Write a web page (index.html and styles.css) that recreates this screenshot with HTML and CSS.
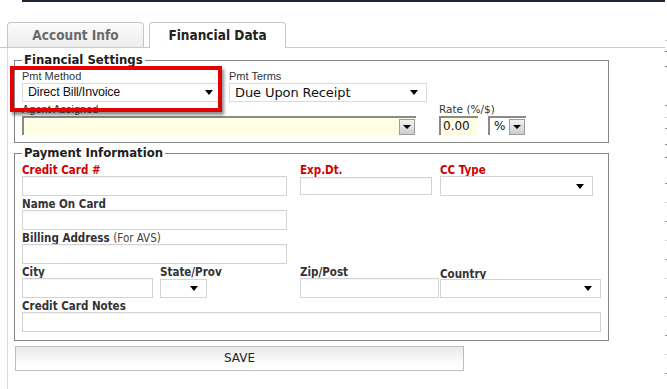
FILE: index.html
```html
<!DOCTYPE html>
<html>
<head>
<meta charset="utf-8">
<link rel="stylesheet" href="styles.css">
</head>
<body>
<div class="page">
  <div class="main">
    <div class="topline"></div>
    <div class="tabs">
      <div class="tab">Account Info</div>
      <div class="tab active">Financial Data</div>
    </div>
    <div class="content">
      <fieldset class="fs fs1">
        <legend>Financial Settings</legend>
        <div class="row">
          <div class="field pm">
            <div class="lbl-s">Pmt Method</div>
            <div class="sel plain w-pm"><span class="seltxt">Direct Bill/Invoice</span><span class="arr"></span></div>
            <div class="highlight"></div>
          </div>
          <div class="field">
            <div class="lbl-s">Pmt Terms</div>
            <div class="sel plain w-terms"><span class="seltxt verd">Due Upon Receipt</span><span class="arr"></span></div>
          </div>
        </div>
        <div class="row row2">
          <div class="field">
            <div class="lbl-s tall">Agent Assigned</div>
            <div class="combo w-agent"><span class="seltxt"></span><span class="cbtn"><span class="arr"></span></span></div>
          </div>
          <div class="field rate">
            <div class="lbl-v">Rate (%/$)</div>
            <div class="rate-inline">
              <div class="yinp w-rate">0.00</div>
              <div class="combo w-pct"><span class="seltxt pct">%</span><span class="cbtn"><span class="arr"></span></span></div>
            </div>
          </div>
        </div>
      </fieldset>

      <fieldset class="fs fs2">
        <legend>Payment Information</legend>
        <div class="grid">
          <div class="field c12">
            <div class="lbl req">Credit Card #</div>
            <div class="inp w-cc"></div>
          </div>
          <div class="field c3">
            <div class="lbl req">Exp.Dt.</div>
            <div class="inp w-exp short"></div>
          </div>
          <div class="field c4">
            <div class="lbl req">CC Type</div>
            <div class="sel w-cctype"><span class="seltxt"></span><span class="arr"></span></div>
          </div>

          <div class="field c12">
            <div class="lbl">Name On Card</div>
            <div class="inp w-cc"></div>
          </div>

          <div class="field c12">
            <div class="lbl">Billing Address <span class="note">(For AVS)</span></div>
            <div class="inp w-cc"></div>
          </div>

          <div class="field c1">
            <div class="lbl">City</div>
            <div class="inp w-city"></div>
          </div>
          <div class="field c2">
            <div class="lbl">State/Prov</div>
            <div class="sel w-state short"><span class="seltxt"></span><span class="arr"></span></div>
          </div>
          <div class="field c3">
            <div class="lbl">Zip/Post</div>
            <div class="inp w-zip"></div>
          </div>
          <div class="field c4">
            <div class="lbl low">Country</div>
            <div class="sel w-country short"><span class="seltxt"></span><span class="arr"></span></div>
          </div>

          <div class="field call">
            <div class="lbl">Credit Card Notes</div>
            <div class="inp w-notes"></div>
          </div>
        </div>
      </fieldset>

      <div class="btn">SAVE</div>
    </div>
  </div>
  <div class="edge"></div>
</div>
</body>
</html>
```

FILE: styles.css
```css
* { box-sizing: border-box; }
html, body { margin: 0; padding: 0; background: #fff; }
body {
  font-family: "DejaVu Sans", Verdana, sans-serif;
  color: #222;
}
.page {
  display: flex;
  width: 667px;
  height: 389px;
  overflow: hidden;
}
.main { width: 665px; flex: none; }
.edge {
  width: 2px;
  flex: none;
  background:
    linear-gradient(#c8c8c8, #c8c8c8) 0 40px / 2px 1px no-repeat,
    linear-gradient(#777, #777) 0 51px / 2px 1px no-repeat,
    linear-gradient(#777, #777) 0 66px / 2px 1px no-repeat,
    linear-gradient(#888, #888) 0 105px / 2px 1px no-repeat,
    linear-gradient(#ccc, #ccc) 0 117px / 2px 1px no-repeat,
    linear-gradient(#999, #999) 0 128px / 2px 1px no-repeat,
    linear-gradient(#888, #888) 0 144px / 2px 1px no-repeat,
    linear-gradient(#777, #777) 0 157px / 2px 1px no-repeat,
    repeating-linear-gradient(to bottom, transparent 0 6px, #999 6px 7px, transparent 7px 25px, #d4d4d4 25px 26px, transparent 26px 38px) 0 177px / 2px 220px no-repeat;
}
.topline {
  height: 2px;
  margin-left: 22px;
  background: #1d2638;
}
.tabs {
  display: flex;
  gap: 5px;
  padding: 20px 0 0 7px;
  height: 46px;
  border-bottom: 1px solid #c9c9c9;
}
.tab {
  width: 137px;
  height: 25px;
  border: 1px solid #c6c6c6;
  border-bottom: none;
  border-radius: 4px 4px 0 0;
  background: linear-gradient(#fbfbfb, #ededed);
  color: #6a6a6a;
  font: bold 13.5px/23px "DejaVu Sans Condensed", "DejaVu Sans", sans-serif;
  text-align: center;
  padding-top: 1px;
}
.tab.active {
  background: #fff;
  color: #222;
  height: 26px;
}
.content {
  margin-left: 7px;
  border-left: 1px solid #dcdcdc;
  height: 341px;
  padding-top: 5px;
}
.fs {
  margin: 0 0 0 6px;
  width: 595px;
  min-width: 0;
  border: 1px solid #868686;
  padding: 3px 7px 7px 7px;
}
.fs legend {
  padding: 0 2px;
  font: bold 13px/14px "DejaVu Sans Condensed", "DejaVu Sans", sans-serif;
  color: #1e1e1e;
}
.fs2 { margin-top: 3px; padding: 2px 7px 8px 7px; }

.row { display: flex; gap: 7px; }
.row2 { gap: 23px; }
.field { display: flex; flex-direction: column; }
.pm { position: relative; }

.lbl-s {
  font: 11px/13px "Liberation Sans", Arial, sans-serif;
  color: #333;
}
.lbl-s.tall { line-height: 14px; }
.lbl-v {
  font: 10.5px/14px "DejaVu Sans", sans-serif;
  color: #333;
}
.lbl {
  font: bold 11.5px/14px "DejaVu Sans Condensed", "DejaVu Sans", sans-serif;
  color: #333;
  white-space: nowrap;
  height: 14px;
  padding-top: 1px;
}
.lbl.req { color: #d10000; }
.lbl.low { padding-top: 3px; }
.note {
  font-weight: normal;
  color: #444;
}

.sel, .inp, .combo, .yinp {
  height: 20px;
  display: flex;
  align-items: center;
}
.sel {
  border: 1px solid #d4d4d4;
  background: #fff;
  justify-content: space-between;
  padding: 0 8px 0 5px;
}
.sel.plain { height: 19px; border-color: #dadada; }
.sel.short { height: 19px; margin-top: 1px; }
.seltxt {
  font: 12.5px/17px "Liberation Sans", Arial, sans-serif;
  color: #111;
  letter-spacing: -0.2px;
}
.seltxt.verd {
  font: 13px/17px "DejaVu Sans", sans-serif;
  letter-spacing: -0.1px;
}
.arr {
  width: 0;
  height: 0;
  border-left: 4px solid transparent;
  border-right: 4px solid transparent;
  border-top: 5px solid #000;
}
.inp {
  border: 1px solid #d2d2d2;
  background: #fff;
  box-shadow: inset 0 1px 1px rgba(0,0,0,0.04);
}
.inp.short { height: 18px; margin-top: 1px; }

.combo {
  height: 19px;
  background: #fffde4;
  border-style: solid;
  border-width: 2px 0 0 2px;
  border-color: #8a8a8a;
  justify-content: space-between;
  padding: 0 1px 0 0;
}
.cbtn {
  width: 16px;
  height: 16px;
  border: 1px solid #9c9c9c;
  background: linear-gradient(#f2f2f2, #cdcdcd);
  display: flex;
  align-items: center;
  justify-content: center;
}
.cbtn .arr {
  border-left-width: 4px;
  border-right-width: 4px;
  border-top-width: 4px;
}
.yinp {
  height: 19px;
  background: #fffde4;
  border-style: solid;
  border-width: 2px 0 0 2px;
  border-color: #8a8a8a;
  font: 12px/17px "DejaVu Sans", sans-serif;
  color: #111;
  padding-left: 2px;
}
.rate-inline { display: flex; gap: 10px; }
.combo.w-pct { background: #fff; padding-left: 4px; }
.seltxt.pct { font: 12px/17px "DejaVu Sans", sans-serif; }

.w-pm { width: 200px; }
.w-terms { width: 198px; }
.w-agent { width: 394px; }
.w-rate { width: 39px; }
.w-pct { width: 38px; }

.highlight {
  position: absolute;
  left: -12px;
  top: -4px;
  width: 212px;
  height: 46px;
  border: 4px solid #e30000;
  box-shadow: 2px 3px 3px rgba(0,0,0,0.45);
  pointer-events: none;
}

.grid {
  display: grid;
  grid-template-columns: 138px 140px 140px 1fr;
}
.c12 { grid-column: 1 / 3; }
.c1 { grid-column: 1; }
.c2 { grid-column: 2; }
.c3 { grid-column: 3; }
.c4 { grid-column: 4; }
.call { grid-column: 1 / 5; }

.w-cc { width: 265px; }
.w-exp { width: 132px; }
.w-cctype { width: 153px; }
.w-city { width: 131px; }
.w-state { width: 47px; }
.w-zip { width: 139px; }
.w-country { width: 161px; }
.w-notes { width: 579px; }

.btn {
  margin: 5px 0 0 7px;
  width: 449px;
  height: 25px;
  border: 1px solid #bdbdbd;
  background: linear-gradient(#e9e9e9, #fdfdfd 70%, #fff);
  font: 12px/23px "DejaVu Sans", sans-serif;
  color: #222;
  text-align: center;
}
```
